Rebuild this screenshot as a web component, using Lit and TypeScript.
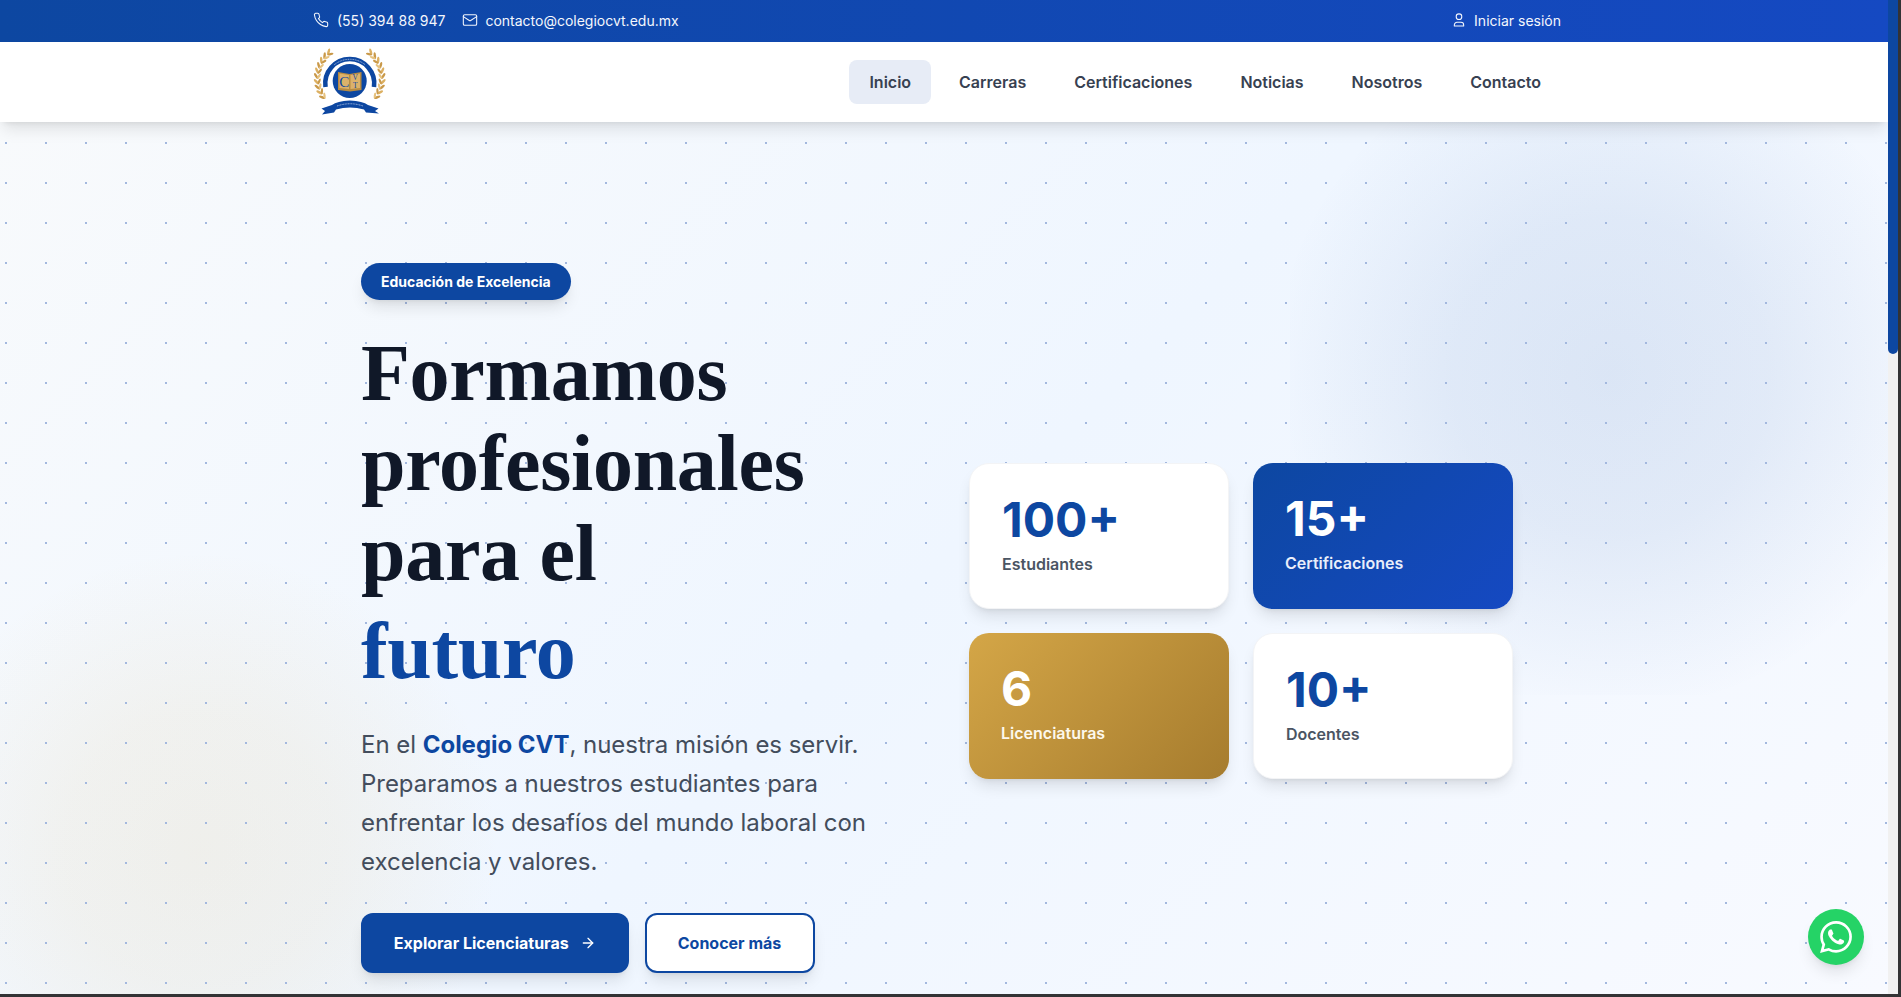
import { LitElement, html, css, svg } from "lit";
import { customElement } from "lit/decorators.js";

function wreath() {
  const out: unknown[] = [];
  const steps = 10;
  for (let i = 0; i < steps; i++) {
    const deg = 141 + (i * 86) / (steps - 1);
    const r = (deg * Math.PI) / 180;
    const x = 36.7 + 32 * Math.cos(r);
    const y = 28 + 32 * Math.sin(r);
    const tan = deg + 90;
    const a = tan - 32;
    const b = tan + 32;
    const ox = x + 2.8 * Math.cos((a * Math.PI) / 180);
    const oy = y + 2.8 * Math.sin((a * Math.PI) / 180);
    const ix = x + 2.6 * Math.cos((b * Math.PI) / 180);
    const iy = y + 2.6 * Math.sin((b * Math.PI) / 180);
    out.push(svg`<ellipse cx=${ox} cy=${oy} rx="3.4" ry="1.25" fill=${i % 2 ? "#dcb062" : "#c9994a"} transform=${`rotate(${a} ${ox} ${oy})`}></ellipse>`);
    out.push(svg`<ellipse cx=${ix} cy=${iy} rx="3.1" ry="1.15" fill=${i % 2 ? "#c9994a" : "#e6c27f"} transform=${`rotate(${b} ${ix} ${iy})`}></ellipse>`);
  }
  return out;
}

const I = {
  phone: svg`<path d="M22 16.92v3a2 2 0 0 1-2.18 2 19.79 19.79 0 0 1-8.63-3.07 19.5 19.5 0 0 1-6-6 19.79 19.79 0 0 1-3.07-8.67A2 2 0 0 1 4.11 2h3a2 2 0 0 1 2 1.72 12.84 12.84 0 0 0 .7 2.81 2 2 0 0 1-.45 2.11L8.09 9.91a16 16 0 0 0 6 6l1.27-1.27a2 2 0 0 1 2.11-.45 12.84 12.84 0 0 0 2.81.7A2 2 0 0 1 22 16.92z"/>`,
  mail: svg`<rect x="2" y="4" width="20" height="16" rx="2"/><path d="m22 7-8.97 5.7a1.94 1.94 0 0 1-2.06 0L2 7"/>`,
  user: svg`<path d="M5 21v-1.5a4 4 0 0 1 4-4h6a4 4 0 0 1 4 4V21z"/><circle cx="12" cy="7" r="4.2"/>`,
  arrow: svg`<path d="M5 12h14"/><path d="m12 5 7 7-7 7"/>`,
};

@customElement("app-root")
export class AppRoot extends LitElement {
  static styles = css`
    :host {
      display: block;
      height: 997px;
      background: #333335;
      overflow: hidden;
      font-family: Inter, "Noto Sans", sans-serif;
    }
    .window { display: flex; width: 1898px; height: 994px; }
    .page { position: relative; flex: 1; min-width: 0; overflow: hidden; display: flex; flex-direction: column; }
    .scrollbar { width: 10px; background: #f1f1f1; }
    .thumb { height: 354px; background: #0d47a1; border-radius: 0 0 5px 5px; }

    .topbar {
      box-sizing: border-box;
      height: 42px;
      background: linear-gradient(90deg, #0d47a1, #1549c2);
      color: #f4f7fd;
      font-size: 14px;
      display: flex;
      align-items: center;
      padding: 0 327px 2px 313px;
      flex: none;
    }
    .topbar .left { display: flex; gap: 17px; }
    .topbar .item { display: flex; align-items: center; gap: 8px; }
    .topbar .item.tight { gap: 7px; }
    .topbar .login { margin-left: auto; }
    .icon { width: 16px; height: 16px; fill: none; stroke: currentColor; stroke-width: 2; stroke-linecap: round; stroke-linejoin: round; flex: none; }
    .topbar .icon { stroke-width: 1.6; }

    .header {
      position: relative;
      z-index: 2;
      height: 80px;
      flex: none;
      background: #fff;
      box-shadow: 0 10px 15px -3px rgba(0,0,0,.1), 0 4px 6px -4px rgba(0,0,0,.1);
      display: flex;
      align-items: center;
      justify-content: space-between;
      padding: 0 327px 0 313px;
    }
    .logo { width: 74px; height: 66px; display: block; margin-top: 2px; overflow: visible; }
    nav { display: flex; gap: 8px; }
    nav a {
      padding: 10px 20px;
      height: 24px;
      line-height: 24px;
      font-size: 16px;
      font-weight: 600;
      color: #374151;
      border-radius: 8px;
    }
    nav a.active { background: #e7ecf6; }

    .hero {
      position: relative;
      flex: 1;
      overflow: hidden;
      background: linear-gradient(135deg, #f8fafc 0%, #eff6ff 50%, #f8faff 100%);
    }
    .blob { position: absolute; width: 640px; height: 640px; }
    .blob.blue { left: 1290px; top: -67px; background: radial-gradient(circle, rgba(13,71,161,.1) 0%, rgba(13,71,161,.08) 35%, rgba(13,71,161,0) 75%); }
    .blob.gold { left: -120px; top: 408px; background: radial-gradient(circle, rgba(212,166,71,.1) 0%, rgba(212,166,71,.08) 30%, rgba(212,166,71,0) 66%); }
    .dots {
      position: absolute;
      inset: 0;
      background-image: radial-gradient(circle at 20px 20.7px, #a3b8de 1.1px, transparent 1.3px);
      background-size: 40px 40px;
      background-position: -14px 0;
    }
    .grid {
      position: relative;
      width: 1152px;
      margin-left: 361px;
      padding-top: 141px;
      display: grid;
      grid-template-columns: 544px 544px;
      gap: 64px;
      align-items: center;
    }
    .copy { padding-bottom: 6px; }
    .badge {
      display: inline-block;
      background: #0d47a1;
      color: #fff;
      font-size: 14px;
      font-weight: 700;
      line-height: 21px;
      padding: 8px 20px;
      border-radius: 999px;
      box-shadow: 0 10px 15px -3px rgba(0,0,0,.1), 0 4px 6px -4px rgba(0,0,0,.1);
      vertical-align: top;
    }
    h1 {
      margin: 28px 0 0;
      font-family: "Liberation Serif", serif;
      font-weight: 700;
      font-size: 80px;
      letter-spacing: -0.3px;
      line-height: 90px;
      color: #101828;
    }
    h1 span { display: block; color: #0d47a1; margin-top: 8px; }
    p {
      margin: 29px 0 0;
      font-size: 24px;
      line-height: 39px;
      letter-spacing: -0.03px;
      color: #434d5c;
      max-width: 544px;
    }
    p strong { color: #0d47a1; font-weight: 700; }
    .actions { display: flex; gap: 16px; margin-top: 32px; }
    .btn {
      box-sizing: border-box;
      height: 60px;
      border-radius: 12px;
      display: flex;
      align-items: center;
      justify-content: center;
      gap: 11px;
      font-size: 16px;
      font-weight: 700;
      box-shadow: 0 10px 15px -3px rgba(0,0,0,.1), 0 4px 6px -4px rgba(0,0,0,.1);
    }
    .btn.primary { width: 267.5px; background: #0d47a1; color: #fff; }
    .btn.ghost { width: 170px; background: #fff; color: #0d47a1; border: 2px solid #0d47a1; }

    .stats {
      display: grid;
      grid-template-columns: 260px 260px;
      gap: 24px;
    }
    .card {
      box-sizing: border-box;
      min-height: 146px;
      padding: 32px;
      border-radius: 20px;
      background: #fff;
      border: 1px solid #f3f4f6;
      box-shadow: 0 10px 15px -3px rgba(0,0,0,.1), 0 4px 6px -4px rgba(0,0,0,.1);
      color: #4b5563;
    }
    .card .num { font-size: 48px; line-height: 48px; font-weight: 700; color: #0d47a1; }
    .card .lab { font-size: 16px; line-height: 24px; font-weight: 600; margin-top: 8px; }
    .card.blue { border: 0; background: linear-gradient(135deg, #0d47a1, #1549c2); color: #e9eefa; }
    .card.gold { border: 0; background: linear-gradient(135deg, #d4a647, #a67c2e); color: #fdf8ec; }
    .card.blue .num, .card.gold .num { color: #fff; }

    .wa {
      position: absolute;
      left: 1808px;
      top: 909px;
      width: 56px;
      height: 56px;
      border-radius: 50%;
      background: #25d366;
      display: flex;
      align-items: center;
      justify-content: center;
      box-shadow: 0 10px 15px -3px rgba(0,0,0,.1), 0 4px 6px -4px rgba(0,0,0,.1);
      z-index: 3;
    }
    .wa svg { width: 32px; height: 32px; fill: #fff; display: block; }
  `;

  private logo() {
    return html`<svg class="logo" viewBox="0 0 74 66" role="img" aria-label="Colegio CVT">
      <g>${wreath()}</g>
      <g transform="translate(73.4 0) scale(-1 1)">${wreath()}</g>
      <path d="M12.5 37 A24.5 24.5 0 1 1 61 37" fill="none" stroke="#0d47a1" stroke-width="4.6"></path>
      <path d="M21 15 A24.5 24.5 0 0 1 52.5 15" fill="none" stroke="#dfe7f5" stroke-width=".7" stroke-dasharray="1 .7"></path>
      <circle cx="36.7" cy="31" r="17" fill="#0d47a1"></circle>
      <path d="M25 22 L36.5 24 L48.5 22 L48.5 40 L37 41.5 L25 40 Z" fill="#b88b40"></path>
      <path d="M26.5 23.5 L36 25 L36 39 L26.5 38 Z M37.5 25 L47 23.5 L47 38 L37.5 39 Z" fill="#dcb26a"></path>
      <text x="31.3" y="36.5" text-anchor="middle" font-family="Liberation Serif, serif" font-size="15" fill="#0d47a1">C</text>
      <text x="42.3" y="30" text-anchor="middle" font-family="Liberation Serif, serif" font-size="7.5" fill="#0d47a1">V</text>
      <text x="42.3" y="37.5" text-anchor="middle" font-family="Liberation Serif, serif" font-size="7.5" fill="#0d47a1">T</text>
      <path d="M8.5 58.5 L19 55 Q24 51 36.7 50.5 Q50 51 55 55 L65.5 58.5 L62 61 L66 63.5 L53 62.5 L51 59.5 Q37 55.5 23 59.5 L21 62.5 L9 64.5 L12 61 Z" fill="#0d47a1"></path>
      <path d="M24 56 Q37 51.5 50 56" fill="none" stroke="#dfe7f5" stroke-width=".7" stroke-dasharray="1 .6"></path>
    </svg>`;
  }

  private card(num: string, lab: string, cls = "") {
    return html`<div class="card ${cls}"><div class="num">${num}</div><div class="lab">${lab}</div></div>`;
  }

  render() {
    return html`<div class="window">
      <div class="page">
        <div class="topbar">
          <div class="left">
            <div class="item"><svg class="icon" viewBox="0 0 24 24">${I.phone}</svg>(55) 394 88 947</div>
            <div class="item tight"><svg class="icon" viewBox="0 0 24 24">${I.mail}</svg>contacto@colegiocvt.edu.mx</div>
          </div>
          <div class="item tight login"><svg class="icon" viewBox="0 0 24 24">${I.user}</svg>Iniciar sesión</div>
        </div>
        <header class="header">
          ${this.logo()}
          <nav>
            <a class="active">Inicio</a><a>Carreras</a><a>Certificaciones</a><a>Noticias</a><a>Nosotros</a><a>Contacto</a>
          </nav>
        </header>
        <section class="hero">
          <div class="blob blue"></div>
          <div class="blob gold"></div>
          <div class="dots"></div>
          <div class="grid">
            <div class="copy">
              <div class="badge">Educación de Excelencia</div>
              <h1>Formamos profesionales para el <span>futuro</span></h1>
              <p>En el <strong>Colegio CVT</strong>, nuestra misión es servir. Preparamos a nuestros estudiantes para enfrentar los desafíos del mundo laboral con excelencia y valores.</p>
              <div class="actions">
                <div class="btn primary">Explorar Licenciaturas <svg class="icon" viewBox="0 0 24 24">${I.arrow}</svg></div>
                <div class="btn ghost">Conocer más</div>
              </div>
            </div>
            <div class="stats">
              ${this.card("100+", "Estudiantes")}
              ${this.card("15+", "Certificaciones", "blue")}
              ${this.card("6", "Licenciaturas", "gold")}
              ${this.card("10+", "Docentes")}
            </div>
          </div>
        </section>
        <div class="wa">
          <svg viewBox="0 0 24 24"><path d="M17.472 14.382c-.297-.149-1.758-.867-2.03-.967-.273-.099-.471-.148-.67.15-.197.297-.767.966-.94 1.164-.173.199-.347.223-.644.075-.297-.15-1.255-.463-2.39-1.475-.883-.788-1.48-1.761-1.653-2.059-.173-.297-.018-.458.13-.606.134-.133.298-.347.446-.52.149-.174.198-.298.298-.497.099-.198.05-.371-.025-.52-.075-.149-.669-1.612-.916-2.207-.242-.579-.487-.5-.669-.51-.173-.008-.371-.01-.57-.01-.198 0-.52.074-.792.372-.272.297-1.04 1.016-1.04 2.479 0 1.462 1.065 2.875 1.213 3.074.149.198 2.096 3.2 5.077 4.487.709.306 1.262.489 1.694.625.712.227 1.36.195 1.871.118.571-.085 1.758-.719 2.006-1.413.248-.694.248-1.289.173-1.413-.074-.124-.272-.198-.57-.347m-5.421 7.403h-.004a9.87 9.87 0 01-5.031-1.378l-.361-.214-3.741.982.998-3.648-.235-.374a9.86 9.86 0 01-1.51-5.26c.001-5.45 4.436-9.884 9.888-9.884 2.64 0 5.122 1.03 6.988 2.898a9.825 9.825 0 012.893 6.994c-.003 5.45-4.437 9.884-9.885 9.884m8.413-18.297A11.815 11.815 0 0012.05 0C5.495 0 .16 5.335.157 11.892c0 2.096.547 4.142 1.588 5.945L.057 24l6.305-1.654a11.882 11.882 0 005.683 1.448h.005c6.554 0 11.89-5.335 11.893-11.893a11.821 11.821 0 00-3.48-8.413z"></path></svg>
        </div>
      </div>
      <div class="scrollbar"><div class="thumb"></div></div>
    </div>`;
  }
}
